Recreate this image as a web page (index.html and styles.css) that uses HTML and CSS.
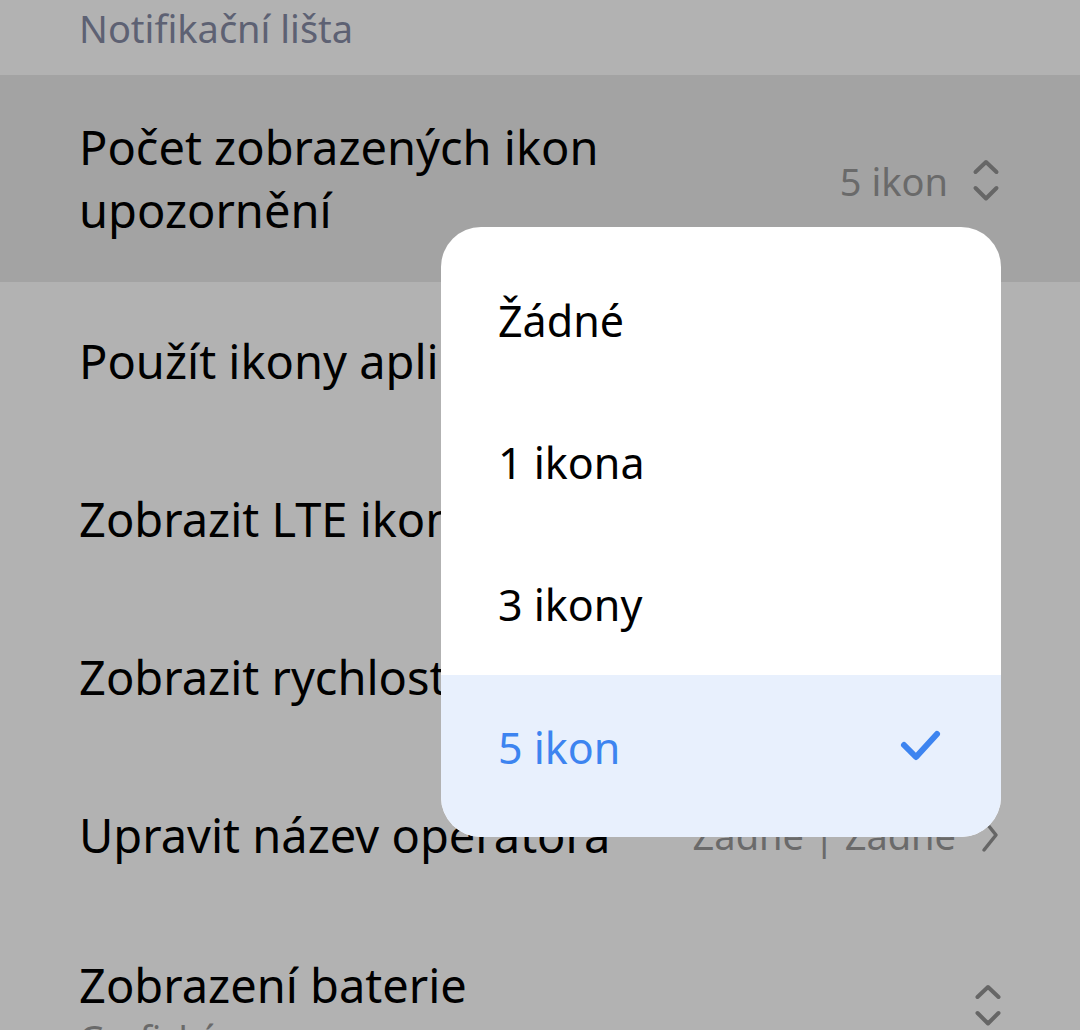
FILE: index.html
```html
<!DOCTYPE html>
<html lang="cs">
<head>
<meta charset="utf-8">
<title>Notifikační lišta</title>
<link rel="stylesheet" href="styles.css">
</head>
<body>
<div class="screen">
  <div class="section-title">Notifikační lišta</div>

  <div class="row row-first">
    <div class="title">Počet zobrazených ikon<br>upozornění</div>
    <div class="value">
      <span>5 ikon</span>
      <svg class="updown" width="28" height="44" viewBox="0 0 28 44"><path d="M3.5 13 L14 3 L24.5 13 M3.5 29 L14 39.5 L24.5 29" fill="none" stroke="#666" stroke-width="4" stroke-linecap="round" stroke-linejoin="round"/></svg>
    </div>
  </div>

  <div class="row"><div class="title">Použít ikony aplikací</div></div>
  <div class="row"><div class="title">Zobrazit LTE ikonu</div></div>
  <div class="row"><div class="title">Zobrazit rychlost sítě</div></div>

  <div class="row">
    <div class="title">Upravit název operátora</div>
    <div class="value">
      <span>Žádné | Žádné</span>
      <svg class="arrow" width="20" height="36" viewBox="0 0 20 36"><path d="M4 3 L16 18 L4 33" fill="none" stroke="#666" stroke-width="3.5" stroke-linecap="round" stroke-linejoin="round"/></svg>
    </div>
  </div>

  <div class="row row-last">
    <div class="title-block">
      <div class="title">Zobrazení baterie</div>
      <div class="subtitle">Grafické</div>
    </div>
    <div class="value">
      <svg class="updown" width="28" height="44" viewBox="0 0 28 44"><path d="M3.5 13 L14 3 L24.5 13 M3.5 29 L14 39.5 L24.5 29" fill="none" stroke="#666" stroke-width="4" stroke-linecap="round" stroke-linejoin="round"/></svg>
    </div>
  </div>

  <div class="popup">
    <div class="option">Žádné</div>
    <div class="option">1 ikona</div>
    <div class="option">3 ikony</div>
    <div class="option option-selected">
      <span>5 ikon</span>
      <svg width="46" height="40" viewBox="0 0 46 40"><path d="M5 18 L17 30 L38 7" fill="none" stroke="#3d84f0" stroke-width="6" stroke-linecap="round" stroke-linejoin="round"/></svg>
    </div>
  </div>
</div>
</body>
</html>
```

FILE: styles.css
```css
* { box-sizing: border-box; }
html, body { margin: 0; padding: 0; }
body {
  background: #b2b2b2;
  font-family: "Noto Sans", "Open Sans", "Liberation Sans", sans-serif;
  color: #000;
}
.screen {
  position: relative;
  width: 1080px;
  height: 1030px;
  overflow: hidden;
  background: #b2b2b2;
}
.section-title {
  height: 75px;
  padding: 3px 0 0 79px;
  font-size: 38px;
  line-height: 50px;
  color: #5d6173;
}
.row {
  display: flex;
  align-items: center;
  justify-content: space-between;
  height: 158px;
  padding: 0 80px 0 79px;
}
.row-first {
  height: 207px;
  background: #a3a3a3;
}
.title {
  font-size: 47px;
  line-height: 63px;
  color: #000;
}
.value {
  display: flex;
  align-items: center;
  gap: 24px;
  font-size: 38px;
  color: #6a6a6a;
}
.row-first .value { margin-top: 4px; }
.row-last {
  align-items: flex-start;
  padding-top: 40px;
}
.row-last .value { padding-top: 30px; margin-right: -2px; }
.subtitle {
  font-size: 36px;
  line-height: 44px;
  color: #6a6a6a;
}
.popup {
  position: absolute;
  left: 441px;
  top: 227px;
  width: 560px;
  height: 610px;
  background: #fff;
  border-radius: 40px;
  overflow: hidden;
  padding-top: 22px;
}
.option {
  display: flex;
  align-items: center;
  justify-content: space-between;
  height: 142px;
  padding: 0 56px 0 57px;
  font-size: 43px;
  color: #000;
}
.option-selected {
  height: 166px;
  padding-bottom: 22px;
  background: #e8f0fd;
  color: #3d84f0;
}
```
